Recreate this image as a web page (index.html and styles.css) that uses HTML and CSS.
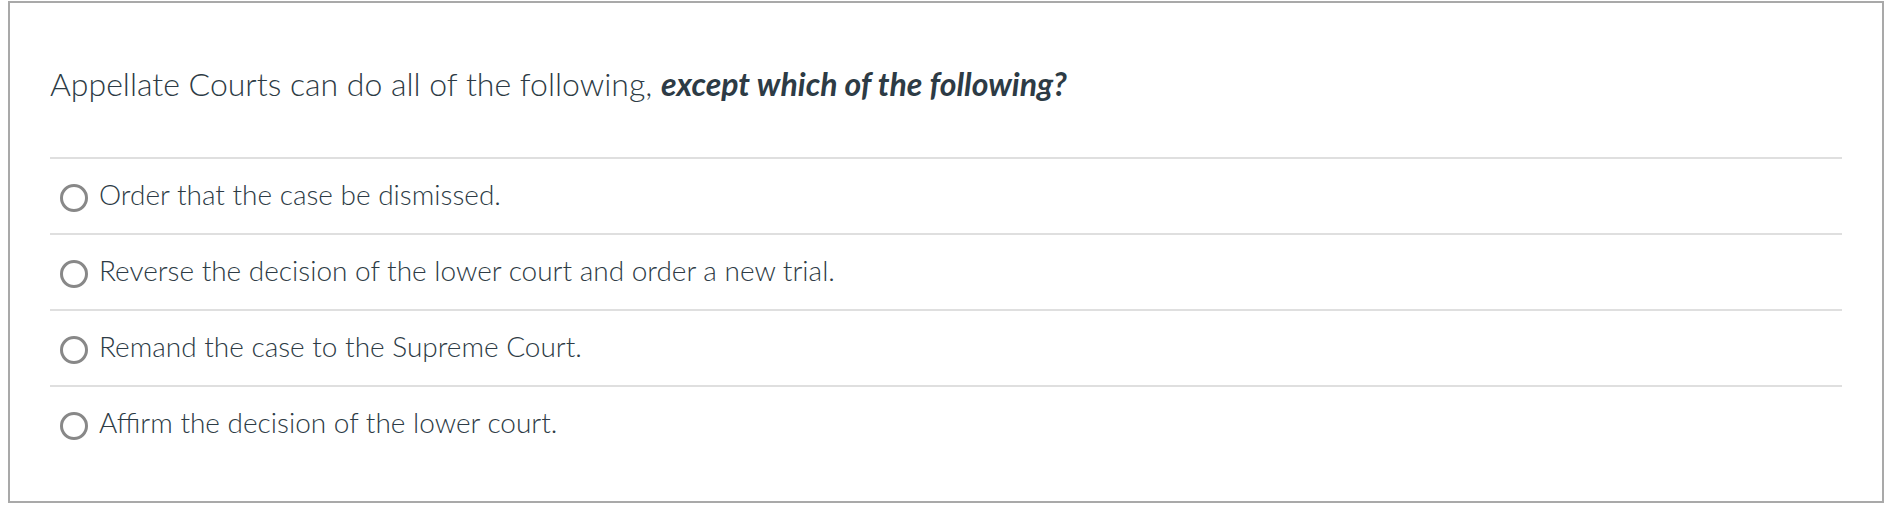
FILE: index.html
```html
<!DOCTYPE html>
<html>
<head>
<meta charset="utf-8">
<link rel="stylesheet" href="styles.css">
</head>
<body>
<div class="question">
  <div class="question-text">Appellate Courts can do all of the following, <strong><em>except which of the following?</em></strong></div>
  <div class="answers">
    <label class="answer"><span class="radio"></span><span class="answer-text">Order that the case be dismissed.</span></label>
    <label class="answer"><span class="radio"></span><span class="answer-text">Reverse the decision of the lower court and order a new trial.</span></label>
    <label class="answer"><span class="radio"></span><span class="answer-text">Remand the case to the Supreme Court.</span></label>
    <label class="answer"><span class="radio"></span><span class="answer-text">Affirm the decision of the lower court.</span></label>
  </div>
</div>
</body>
</html>
```
FILE: styles.css
```css
html, body {
  margin: 0;
  padding: 0;
  background: #ffffff;
}
body {
  font-family: "Lato Light", Lato, "Open Sans", "Liberation Sans", sans-serif;
  color: #2d3b45;
}
.question {
  margin: 1px 6px 0 8px;
  height: 498px;
  border: 2px solid #a9a9a9;
  padding: 0 40px 0 40px;
}
.question-text {
  font-size: 32px;
  font-weight: 300;
  line-height: 40px;
  padding-top: 61px;
  padding-bottom: 53px;
}
.question-text strong {
  font-family: Lato, "Open Sans", "Liberation Sans", sans-serif;
  font-weight: 700;
}
.answers {
  display: flex;
  flex-direction: column;
}
.answer {
  display: flex;
  align-items: center;
  height: 76px;
  border-top: 2px solid #dfdfdf;
  box-sizing: border-box;
  padding-left: 10px;
  padding-bottom: 4px;
}
.radio {
  width: 22px;
  height: 22px;
  border: 3px solid #888888;
  border-radius: 50%;
  flex: none;
  margin-right: 11px;
  margin-top: 8px;
}
.answer-text {
  font-size: 28px;
  font-weight: 300;
}
```
